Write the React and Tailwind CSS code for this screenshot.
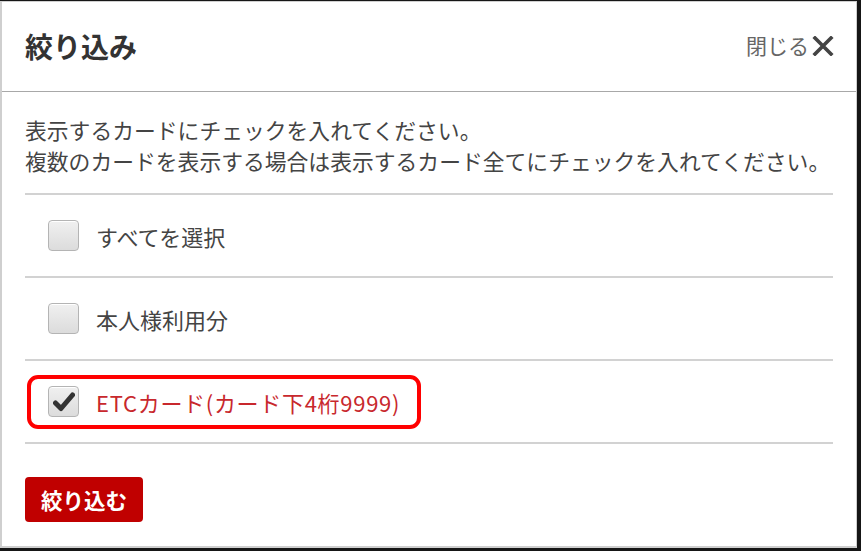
import React from "react";

const font = { fontFamily: '"Noto Sans CJK JP", "Noto Sans", sans-serif' };

function Box({ checked }) {
  return (
    <div className="w-[31px] h-[31px] rounded-[4px] border border-[#b4b4b4] bg-gradient-to-b from-[#f0f0f0] to-[#dcdcdc] flex items-center justify-center shrink-0 shadow-[inset_0_1px_0_#fff]">
      {checked && (
        <svg width="22" height="20" viewBox="0 0 22 20">
          <path d="M2.5 11 L8 16.5 L19.5 3" fill="none" stroke="#333" strokeWidth="5" strokeLinecap="round" strokeLinejoin="round" />
        </svg>
      )}
    </div>
  );
}

function Row({ label, checked, red, highlight }) {
  return (
    <div className="relative h-[83px] flex items-center pl-[23px] border-b-2 border-[#d2d2d2]">
      <Box checked={checked} />
      <span className={`ml-[17px] text-[22px] leading-none whitespace-nowrap ${red ? "text-[#c8282d] tracking-[0.7px]" : "text-[#444]"}`}>{label}</span>
      {highlight && (
        <div className="absolute left-[2px] top-[14px] w-[394px] h-[54px] border-[4px] border-[#ff0000] rounded-[11px]" />
      )}
    </div>
  );
}

export default function App() {
  return (
    <div className="w-[861px] h-[551px] bg-[#161616] pt-[1px] pr-[4px] pb-[3px]" style={font}>
      <div className="w-full h-full bg-white border-l-2 border-t border-r border-b-2 border-[#cfcfcf] flex flex-col overflow-hidden">
        <div className="h-[90px] shrink-0 flex items-center justify-between pl-[23px] pr-[22px] border-b border-[#a8a8a8]">
          <div className="text-[28px] font-bold text-[#333] leading-none -mt-[2px]">絞り込み</div>
          <div className="flex items-center text-[#666] -mt-[2px]">
            <span className="text-[21px] leading-none">閉じる</span>
            <svg width="22" height="20" viewBox="0 0 22 20" className="ml-[3px]">
              <path d="M3 2 L19 18 M19 2 L3 18" stroke="#444" strokeWidth="3.6" strokeLinecap="square" />
            </svg>
          </div>
        </div>
        <div className="px-[23px]">
          <div className="pt-[22px] pb-[17px] text-[21.8px] leading-[31px] text-[#444] whitespace-nowrap">
            <div>表示するカードにチェックを入れてください。</div>
            <div>複数のカードを表示する場合は表示するカード全てにチェックを入れてください。</div>
          </div>
          <div className="border-t-2 border-[#d2d2d2]" />
          <Row label="すべてを選択" />
          <Row label="本人様利用分" />
          <Row label="ETCカード(カード下4桁9999)" checked red highlight />
          <div className="pt-[33px]">
            <button className="w-[118px] h-[45px] rounded-[4px] bg-[#c00000] text-white text-[21.5px] font-bold leading-none">絞り込む</button>
          </div>
        </div>
      </div>
    </div>
  );
}
